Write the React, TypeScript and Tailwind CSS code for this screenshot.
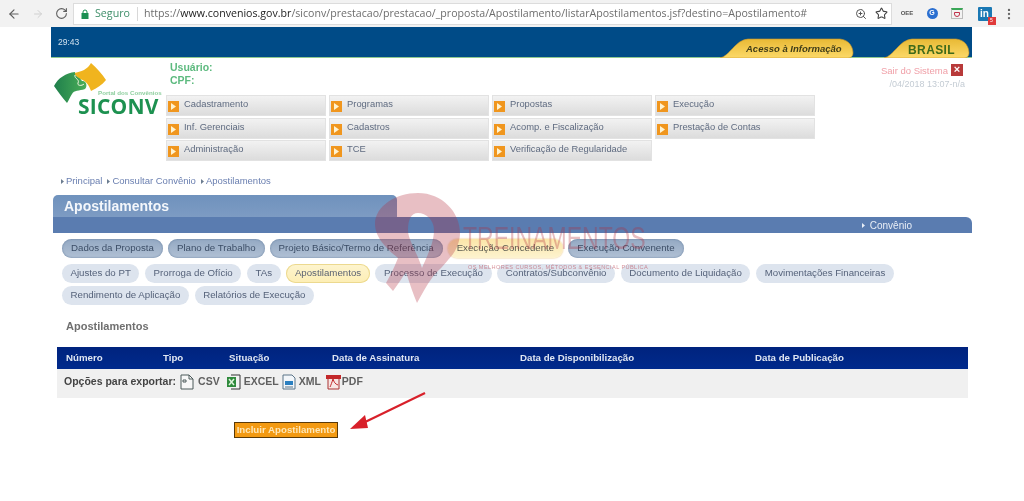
import { ArrowLeft, ArrowRight, RotateCw, ZoomIn, Star, MoreVertical } from "lucide-react";

const menu = [
  ["Cadastramento", "Programas", "Propostas", "Execução"],
  ["Inf. Gerenciais", "Cadastros", "Acomp. e Fiscalização", "Prestação de Contas"],
  ["Administração", "TCE", "Verificação de Regularidade"],
];

const row1 = ["Dados da Proposta", "Plano de Trabalho", "Projeto Básico/Termo de Referência"];
const row2 = ["Ajustes do PT", "Prorroga de Ofício", "TAs", "Apostilamentos", "Processo de Execução", "Contratos/Subconvênio", "Documento de Liquidação", "Movimentações Financeiras"];
const row3 = ["Rendimento de Aplicação", "Relatórios de Execução"];

function MenuBtn({ label }: { label: string }) {
  return (
    <div className="flex h-[21px] w-[160px] items-center gap-[5px] border border-[#e2e2e2] bg-gradient-to-b from-[#f2f2f2] to-[#dcdcdc] pl-[1px] text-[9.4px] text-[#5f6b80]">
      <span className="mt-[2px] flex h-[11px] w-[11px] shrink-0 items-center justify-center bg-[#f0961e]">
        <svg width="5" height="7" viewBox="0 0 5 7"><path d="M0 0l5 3.5L0 7z" fill="#fff3d0" /></svg>
      </span>
      <span className="-mt-[2px]">{label}</span>
    </div>
  );
}

function Pill({ label, kind = "light" }: { label: string; kind?: "light" | "dark" | "gold" | "goldLight" }) {
  const c =
    kind === "dark"
      ? "bg-gradient-to-b from-[#94a9c3] to-[#b0c0d4] text-[#3b4d66] shadow-[inset_0_0_2px_#5d7899] px-[9px]"
      : kind === "gold"
      ? "bg-gradient-to-b from-[#fbe6a8] to-[#fdf3cf] text-[#5b5b50] shadow-[0_0_2px_#e8b860] px-[9px]"
      : kind === "goldLight"
      ? "bg-gradient-to-b from-[#fdf4cf] to-[#fdeeb4] text-[#5c6372] shadow-[inset_0_0_0_1px_#ecd98f] px-[8.5px]"
      : "bg-[#dde4ee] text-[#55627a] px-[8.5px]";
  return (
    <div className={`flex h-[19px] items-center whitespace-nowrap rounded-[10px] text-[9.7px] ${c}`}>
      {label}
    </div>
  );
}

function Logo() {
  return (
    <div className="relative h-[60px] w-[113px] shrink-0">
      <svg className="absolute -left-[3px] -top-[5px]" width="60" height="50" viewBox="0 0 60 50">
        <defs>
          <linearGradient id="lg" x1="0" y1="0" x2="1" y2="0">
            <stop offset="0" stopColor="#1f7f4c" />
            <stop offset="1" stopColor="#4aae58" />
          </linearGradient>
        </defs>
        <path d="M24 15 C31 14 38 11 41 5 C47 10 52 16 56 22 C52 27 47 30 41 33 C39 27 35 21 28 21 Z" fill="#f0b41e" />
        <path d="M4 28 C8 20 16 15 25 14 C24 19 30 19 32 23 C36 22 38 28 35 31 C29 33 24 32 22 36 C20 39 19 42 17 45 C12 39 8 34 4 28Z" fill="url(#lg)" />
        <path d="M25 17 C24 21 30 21 28 25 C27 28 32 28 34 26" stroke="#f4f4e0" strokeWidth="1" fill="none" />
      </svg>
      <span className="absolute left-[45px] top-[26px] whitespace-nowrap text-[6.2px] font-bold leading-[8px] text-[#8fcf9f]">Portal dos Convênios</span>
      <span className="absolute left-[25px] top-[30px] font-['Open_Sans',sans-serif] text-[21px] font-bold leading-[26px] tracking-[0.2px] text-[#1d9150]">SICONV</span>
    </div>
  );
}

function GoldTab({ children, w }: { children: React.ReactNode; w: number }) {
  return (
    <div className="relative h-[20px]" style={{ width: w }}>
      <svg className="absolute inset-0" width={w} height="20" viewBox={`0 0 ${w} 20`}>
        <defs>
          <linearGradient id="gold" x1="0" y1="0" x2="0" y2="1">
            <stop offset="0" stopColor="#e8b935" />
            <stop offset="1" stopColor="#fcd968" />
          </linearGradient>
        </defs>
        <path d={`M0 20 C10 18 15 2 28 1 L${w - 14} 1 C${w - 4} 2 ${w - 1} 10 ${w - 1} 15 C${w - 1} 18 ${w - 3} 20 ${w - 6} 20 Z`} fill="url(#gold)" stroke="#c9962a" strokeWidth="0.6" />
      </svg>
      {children}
    </div>
  );
}

function Ext({ children }: { children: React.ReactNode }) {
  return <div className="flex h-[18px] w-[18px] items-center justify-center">{children}</div>;
}

function FileIcon({ kind }: { kind: "csv" | "xls" | "xml" | "pdf" }) {
  if (kind === "csv")
    return (
      <svg width="14" height="16" viewBox="0 0 14 16"><path d="M1 1h8l4 4v10H1z" fill="#f7f7f7" stroke="#4c5a5a" /><path d="M9 1v4h4M3 6h3v2H3z" fill="none" stroke="#4c5a5a" /></svg>
    );
  if (kind === "xls")
    return (
      <svg width="15" height="16" viewBox="0 0 15 16"><path d="M5 1h9v14H5" fill="#f4f4f4" stroke="#333" /><path d="M1 3h9v10H1z" fill="#2f8a3c" /><path d="M3 5l5 6M8 5l-5 6" stroke="#dff3dc" strokeWidth="1.5" /></svg>
    );
  if (kind === "xml")
    return (
      <svg width="14" height="16" viewBox="0 0 14 16"><path d="M1 1h9l3 3v11H1z" fill="#f2f6fa" stroke="#5b7488" /><path d="M3 7h8v4H3z" fill="#2a7fc0" /><path d="M3 13h8" stroke="#5b7488" /></svg>
    );
  return (
    <svg width="15" height="16" viewBox="0 0 15 16"><path d="M2 2h11v13H2z" fill="#f8e6e4" stroke="#a33" /><path d="M0 1h15v4H0z" fill="#c3282a" /><path d="M7 5c-1 3-2 6-3 8M7 5c1 3 2 5 5 6" stroke="#c3282a" fill="none" /></svg>
  );
}

export default function App() {
  return (
    <div className="relative h-[501px] w-[1024px] overflow-hidden bg-white font-['Liberation_Sans',sans-serif] blur-[0.3px]">
      {/* browser bar */}
      <div className="flex h-[27px] items-center bg-[#f2f2f2]">
        <div className="flex w-[73px] items-center gap-[11px] pl-[7px]">
          <ArrowLeft size={14} className="text-[#5e5e5e]" />
          <ArrowRight size={12} className="text-[#d0d0d0]" />
          <RotateCw size={13} className="text-[#5e5e5e]" />
        </div>
        <div className="flex h-[22px] w-[819px] shrink-0 items-center border border-[#dcdcdc] bg-white pl-[7px] pr-[3px] font-['Open_Sans',sans-serif] text-[10.62px]">
          <svg width="8" height="10" viewBox="0 0 8 10" className="shrink-0"><path d="M2 4V3a2 2 0 0 1 4 0v1" stroke="#1b8f52" fill="none" /><path d="M0.5 4h7v6h-7z" fill="#1b8f52" /></svg>
          <span className="ml-[6px] text-[10.7px] text-[#3f8f6a]">Seguro</span>
          <span className="ml-[7px] mr-[6px] h-[14px] w-px bg-[#d8d8d8]" />
          <span className="whitespace-nowrap text-[#6d6d6d]">
            https://<span className="text-[#222]">www.convenios.gov.br</span>/siconv/prestacao/prestacao/_proposta/Apostilamento/listarApostilamentos.jsf?destino=Apostilamento#
          </span>
          <div className="ml-auto flex items-center gap-[8px]">
            <ZoomIn size={12} className="text-[#555]" />
            <Star size={13} className="text-[#444]" />
          </div>
        </div>
        <div className="ml-[6px] flex items-center gap-[7px]">
          <Ext><span className="text-[6px] font-bold text-[#555]">OEE</span></Ext>
          <Ext><span className="flex h-[11px] w-[11px] items-center justify-center rounded-full bg-[#2b6fd0] text-[7px] font-bold text-white">G</span></Ext>
          <Ext><span className="flex h-[11px] w-[12px] items-center justify-center border border-[#bbb] border-t-2 border-t-[#3aa757]"><span className="h-[5px] w-[6px] rounded-b-[3px] border border-[#c0304a]" /></span></Ext>
          <Ext>
            <span className="relative ml-[5px] flex h-[14px] w-[14px] shrink-0 items-center justify-center rounded-[1px] bg-[#1a78b4] text-[10px] font-bold text-white">
              in
              <span className="absolute -bottom-[4px] -right-[4px] flex h-[8px] w-[8px] items-center justify-center bg-[#e03a3a] text-[5px] font-normal">5</span>
            </span>
          </Ext>
          <MoreVertical size={14} className="ml-[4px] text-[#666]" />
        </div>
      </div>

      <div className="ml-[51px] w-[921px]">
        {/* banner */}
        <div className="flex h-[31px] items-end justify-between border-b border-[#8fc98f] bg-[#004b87]">
          <span className="mb-[8px] ml-[7px] text-[8.5px] text-[#cfe0ee]">29:43</span>
          <div className="mr-[2px] flex items-end gap-[30px]">
            <div className="-mb-[1px]">
              <GoldTab w={134}>
                <span className="absolute left-[26px] top-[4px] whitespace-nowrap text-[9.5px] font-bold italic text-[#3f3c18]">Acesso à Informação</span>
              </GoldTab>
            </div>
            <div className="-mb-[1px]">
              <GoldTab w={86}>
                <span className="absolute left-[24px] top-[3px] text-[12px] font-bold tracking-[0.4px] text-[#3f6a1a]">BRASIL</span>
              </GoldTab>
            </div>
          </div>
        </div>

        {/* header */}
        <div className="flex h-[104px] pl-[2px]">
          <div className="mt-[5px]"><Logo /></div>
          <div className="flex flex-1 flex-col">
            <div className="ml-[4px] mt-[3px] text-[10.5px] font-bold leading-[13px] text-[#5dba7f]">
              <div>Usuário:</div>
              <div>CPF:</div>
            </div>
            <div className="mt-[8px] flex flex-col gap-[1.5px]">
              {menu.map((r, i) => (
                <div key={i} className="flex gap-[3px]">
                  {r.map((m) => <MenuBtn key={m} label={m} />)}
                </div>
              ))}
            </div>
          </div>
          <div className="-ml-[160px] mr-[7px] mt-[6px] flex flex-col items-end">
            <div className="mr-[2px] flex items-center gap-[3px] text-[9.5px] leading-[14px] text-[#f0a0a8]">
              Sair do Sistema
              <span className="-mt-[3px] flex h-[12px] w-[12px] items-center justify-center bg-[#b83a3a] text-[11px] font-bold leading-none text-white">×</span>
            </div>
            <div className="text-[9px] leading-[12px] text-[#c4ccd4]">/04/2018 13:07-n/a</div>
          </div>
        </div>

        {/* breadcrumb */}
        <div className="ml-[10px] mt-[12px] flex h-[14px] items-center gap-[5px] text-[9.5px] text-[#6a7fb0]">
          {["Principal", "Consultar Convênio", "Apostilamentos"].map((b) => (
            <span key={b} className="flex items-center gap-[2px]">
              <svg width="3" height="5" viewBox="0 0 3 5"><path d="M0 0l3 2.5L0 5z" fill="#6b7c90" /></svg>
              {b}
            </span>
          ))}
        </div>

        {/* section head */}
        <div className="ml-[2px] mt-[7px]">
          <div className="flex h-[22px] w-[344px] items-center rounded-t-[5px] bg-gradient-to-b from-[#6f92bd] to-[#7d9bc3] pl-[11px] pt-[1px] text-[14px] font-bold text-[#f4f7fb]">
            Apostilamentos
          </div>
          <div className="flex h-[16px] items-center justify-end rounded-tr-[6px] bg-[#5a7cb0] pr-[60px] text-[10px] text-[#e8eef6]">
            <svg className="mr-[5px]" width="3" height="5" viewBox="0 0 3 5"><path d="M0 0l3 2.5L0 5z" fill="#e8eef6" /></svg>
            Convênio
          </div>
        </div>

        {/* pills */}
        <div className="ml-[11px] mt-[6px] flex flex-col">
          <div className="flex gap-[5px]">
            {row1.map((p) => <Pill key={p} label={p} kind="dark" />)}
            <Pill label="Execução Concedente" kind="gold" />
            <Pill label="Execução Convenente" kind="dark" />
          </div>
          <div className="mt-[6px] flex gap-[5.8px]">
            {row2.map((p) => <Pill key={p} label={p} kind={p === "Apostilamentos" ? "goldLight" : "light"} />)}
          </div>
          <div className="mt-[3px] flex gap-[5.8px]">
            {row3.map((p) => <Pill key={p} label={p} />)}
          </div>
        </div>

        {/* title */}
        <div className="ml-[15px] mt-[14px] text-[11px] font-bold leading-[14px] text-[#6f6f6f]">Apostilamentos</div>

        {/* table */}
        <div className="ml-[6px] mt-[14px] w-[911px]">
          <div className="flex h-[22px] items-center bg-gradient-to-b from-[#00237e] to-[#002a8c] text-[9.7px] font-bold text-[#dfe6f2]">
            <span className="ml-[9px] w-[97px]">Número</span>
            <span className="w-[66px]">Tipo</span>
            <span className="w-[103px]">Situação</span>
            <span className="w-[188px]">Data de Assinatura</span>
            <span className="w-[235px]">Data de Disponibilização</span>
            <span>Data de Publicação</span>
          </div>
          <div className="flex h-[29px] items-start bg-[#f0f0f0] pl-[7px] pt-[5px] text-[10.5px] font-bold text-[#606060]">
            <span className="text-[#444]">Opções para exportar:</span>
            <span className="ml-[4px] flex items-center gap-[4px]"><FileIcon kind="csv" />CSV</span>
            <span className="ml-[6px] flex items-center gap-[3px]"><FileIcon kind="xls" />EXCEL</span>
            <span className="ml-[3px] flex items-center gap-[3px]"><FileIcon kind="xml" />XML</span>
            <span className="ml-[5px] flex items-center gap-px"><FileIcon kind="pdf" />PDF</span>
          </div>
        </div>

        {/* action */}
        <div className="ml-[183px] mt-[24px] flex h-[16px] w-[104px] items-center justify-center border border-[#5a3a08] bg-[#f39a12] text-[9.7px] font-bold text-[#fde7b8]">
          Incluir Apostilamento
        </div>
      </div>

      {/* red arrow over content */}
      <svg className="pointer-events-none absolute left-[345px] top-[388px]" width="85" height="45" viewBox="0 0 85 45">
        <path d="M80 5 L16 36" stroke="#d8202a" strokeWidth="2.2" />
        <path d="M5 41 L20 27 L23 40 Z" fill="#d8202a" />
      </svg>

      {/* watermark over content */}
      <svg className="pointer-events-none absolute left-[370px] top-[188px]" width="100" height="120" viewBox="0 0 100 120">
        <path fillRule="evenodd" d="M48 5 C72 5 90 24 90 45 C90 54 86 64 78 72 C72 80 66 84 62 90 C56 98 52 106 47 115 C43 106 40 96 36 84 C32 90 28 96 23 103 L16 95 C20 88 24 80 28 70 C18 62 5 50 5 36 C5 18 26 5 48 5Z M48 25 C41 25 38 32 38 42 C38 52 47 64 52 80 C56 70 64 56 64 42 C64 32 56 25 48 25Z" fill="#b22a3a" fillOpacity="0.3" />
      </svg>
      <div className="pointer-events-none absolute left-[463px] top-[222px] origin-left text-[32px] leading-[32px] text-[#b22a3a] opacity-30 [transform:scaleX(0.72)]">TREINAMENTOS</div>
      <div className="pointer-events-none absolute left-[468px] top-[263px] whitespace-nowrap text-[5.6px] tracking-[0.4px] text-[#b22a3a] opacity-50">OS MELHORES CURSOS, MÉTODOS &amp; ESSENCIAL PÚBLICA</div>
    </div>
  );
}
